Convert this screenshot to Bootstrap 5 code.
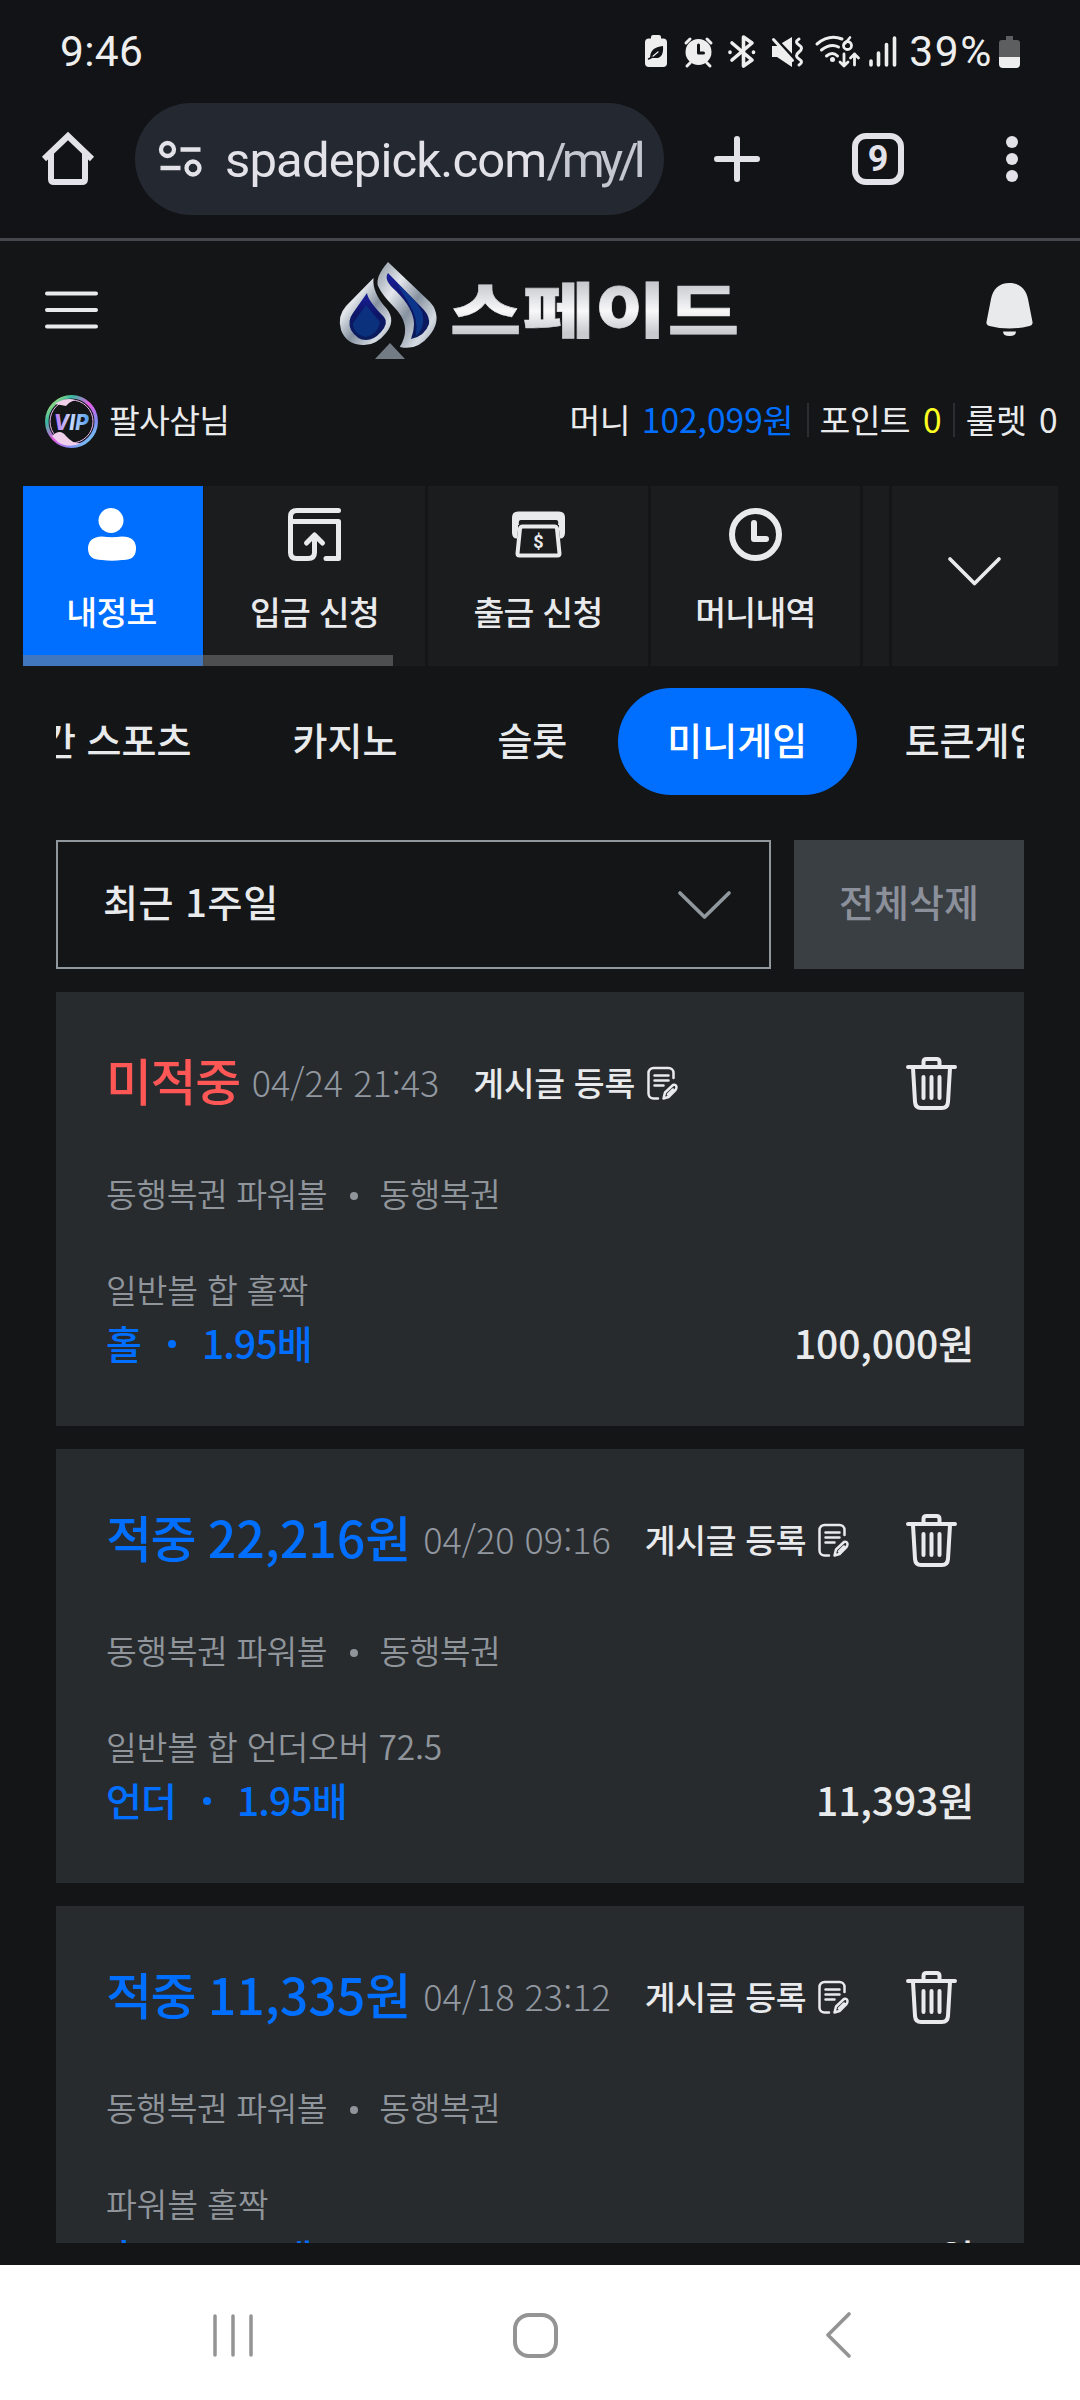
<!DOCTYPE html>
<html lang="ko">
<head>
<meta charset="utf-8">
<meta name="viewport" content="width=device-width, initial-scale=1">
<title>스페이드</title>
<link href="https://cdn.jsdelivr.net/npm/bootstrap@5.3.0/dist/css/bootstrap.min.css" rel="stylesheet">
<style>
  html, body { width: 1080px; height: 2400px; overflow: hidden; }
  body { background: #131517; color: #e9eaec; font-family: "Noto Sans CJK KR", sans-serif; font-size: 33.5px; line-height: 1.2; letter-spacing: -.7px; white-space: nowrap; }
  svg { display: block; flex: none; overflow: visible; }
  .sys { font-family: Roboto, sans-serif; letter-spacing: 0; background: #121316; }
  .statusbar { height: 103px; padding: 0 60px 0 60px; }
  .statusbar .txt { font-size: 42.5px; color: #eee; }
  .browserbar { height: 138px; padding: 0 0 23px 42px; border-bottom: 3px solid #46464f; }
  .urlpill { width: 529px; height: 112px; border-radius: 56px; background: #242830; margin-left: 41px; padding-left: 24px; }
  .urltext { font-size: 49px; color: #e3e2e9; margin-left: 23px; padding-top: 4px; letter-spacing: -.85px; }
  .urltext span { color: #c4c6d0; letter-spacing: -4.8px; }
  .tabcount { font-size: 36px; font-weight: 700; width: 52px; height: 52px; border: 6px solid #e3e2e9; border-radius: 14px; color: #e3e2e9; line-height: 1; margin-left: 91px; }
  .sitehead { height: 137px; padding: 0 47px 0 45px; }
  .brandname { font-weight: 900; font-size: 62px; line-height: 1; letter-spacing: 1px; margin: 0 0 4px 14px; transform: scaleX(1.25); transform-origin: left; background: linear-gradient(#c9cacf 12%, #f8f8f9 55%, #c9cacf 90%); -webkit-background-clip: text; background-clip: text; color: transparent; -webkit-text-stroke: .6px transparent; }
  .userline { height: 88px; padding: 0 23px 5px 45px; }
  .blue { color: #006fff; }
  .sepbar { width: 2px; height: 34px; background: #2b2d30; }
  .menubar { height: 180px; margin: 20px 22px 0 23px; }
  .tile { background: #1b1c1e; height: 180px; padding-top: 22px; font-weight: 500; }
  .tile .lbl { margin-top: 30px; line-height: 40px; }
  .tile.on { background: #006fff; color: #fff; padding-right: 3px; }
  .thumb { position: absolute; left: 0; bottom: 0; width: 370px; height: 11px; background: rgba(128,128,128,.5); }
  .cats { height: 107px; margin: 22px 56px 0; overflow: hidden; font-size: 38px; font-weight: 500; letter-spacing: 0; }
  .cats > div { flex: none; height: 107px; padding: 0 50.5px 6px; border-radius: 54px; }
  .cats .on { background: #006fff; color: #fff; padding: 0 49.5px 6px; }
  .filter { margin: 45px 56px 0; height: 129px; font-size: 38px; font-weight: 500; letter-spacing: 0; }
  .filter .cap { padding-bottom: 7px; }
  .pick { width: 715px; border: 2px solid #90979d; padding: 0 38px 0 45px; }
  .delall { width: 230px; background: #3a3f43; color: #8b909b; }
  .bets { margin: 23px 56px 0; height: 1251px; overflow: hidden; gap: 23px; }
  .bet { flex: none; height: 434px; background: #272b2e; padding: 61px 50px 0 50px; }
  .bet .headrow { height: 60px; }
  .bet h2 { font-size: 50px; font-weight: 500; letter-spacing: -1.4px; line-height: 60px; margin: 0; padding-bottom: 8px; }
  .bet h2 span { letter-spacing: 0; }
  .bet .when { font-size: 36px; font-weight: 300; color: #9298a0; margin-left: 12px; letter-spacing: 0; padding-bottom: 3px; }
  .bet .post { font-weight: 500; margin-left: 34px; letter-spacing: -.3px; padding-bottom: 1px; }
  .bet .noteicon { margin-left: 12px; }
  .bet .trashicon { margin-right: 17px; }
  .dim { color: #8f959b; font-weight: 350; line-height: 40px; letter-spacing: -.5px; }
  .game { margin-top: 60px; }
  .market { margin-top: 56px; letter-spacing: -.2px; }
  .pickrow { font-size: 39px; font-weight: 500; line-height: 50px; letter-spacing: -.1px; margin-top: 8px; }
  .pickrow .blue { letter-spacing: -.9px; }
  .dot { display: inline-block; width: 8px; height: 8px; border-radius: 50%; background: currentColor; margin: -3px 21px 0 23px; }
  .pickrow .dot { margin: 4px 26px 0 27px; }
  .androidnav { height: 135px; background: #fff; margin-top: 22px; padding: 5px 229px 0 213px; }
</style>
<script src="https://cdn.jsdelivr.net/npm/bootstrap@5.3.0/dist/js/bootstrap.bundle.min.js"></script>
</head>
<body>
<svg width="0" height="0" class="position-absolute">
  <defs>
    <linearGradient id="silver" x1="0" y1="0" x2="1" y2="1"><stop offset="0" stop-color="#8b949f"/><stop offset=".3" stop-color="#e4e8ed"/><stop offset=".55" stop-color="#8792a0"/><stop offset=".8" stop-color="#d5dbe2"/><stop offset="1" stop-color="#8e98a5"/></linearGradient>
    <linearGradient id="navy" x1="0" y1="0" x2="0" y2="1"><stop offset="0" stop-color="#1a1f9c"/><stop offset=".45" stop-color="#0d1566"/><stop offset="1" stop-color="#0b1d5c"/></linearGradient>
    <linearGradient id="ring" x1="0" y1="0" x2="1" y2="1"><stop offset="0" stop-color="#e8f06a"/><stop offset=".25" stop-color="#36b9a0"/><stop offset=".5" stop-color="#e95be4"/><stop offset=".75" stop-color="#7f8cf5"/><stop offset="1" stop-color="#6ff0ee"/></linearGradient>
    <linearGradient id="vip" x1="0" x2="1"><stop offset="0" stop-color="#b56cf0"/><stop offset=".5" stop-color="#c9dcf8"/><stop offset="1" stop-color="#4f9af0"/></linearGradient>
    <symbol id="note" viewBox="0 0 31 34"><g fill="none" stroke="#e9eaec" stroke-width="2.500" stroke-linecap="round" stroke-linejoin="round"><path d="M26.500 12V7a5 5 0 0 0-5-5H6.500a5 5 0 0 0-5 5v20.500a5 5 0 0 0 5 5h4.500M7.500 9.500h14M7.500 14.500h14M7.500 19.500h9M16.500 32.500l1.500-6 8-7.500q3-1 3.500 2 0 2-1 3l-7 7zM21 28.500l5-5"/></g></symbol>
    <symbol id="trash" viewBox="0 0 51 53"><g fill="none" stroke="#e9eaec" stroke-width="4" stroke-linecap="round" stroke-linejoin="round"><path d="M2 10h47M17.500 9V5q0-3 3-3h10q3 0 3 3v4M7 11l2 34q.5 6 6 6h21q5.500 0 6-6l2-34M17.500 20v21M25.500 20v21M33.500 20v21"/></g></symbol>
  </defs>
</svg>

<header class="sys">
  <div class="statusbar d-flex align-items-center">
    <div class="txt me-auto" style="letter-spacing:.3px">9:46</div>
    <svg width="262" height="36" viewBox="643 34 262 36" fill="none" stroke="#eee" stroke-width="3" stroke-linecap="round" stroke-linejoin="round">
      <g fill="#eee" stroke="none"><rect x="650" y="35" width="10" height="8" rx="2"/><rect x="644" y="38.500" width="22" height="28.500" rx="4"/></g>
      <path d="M649 58q0-11 13-12 1 13-8 12-2.500 0-5 0z" fill="#121316" stroke="none"/><path d="M651 57l6-5" stroke-width="1.200"/><path d="M647.500 59l4-2" stroke="#121316" stroke-width="1.500"/>
      <g><circle cx="697.500" cy="52" r="13" fill="#eee" stroke="none"/><path d="M685 43l4-4M710 43l-4-4M689 63l-3 3M706 63l3 3"/><path d="M697.500 45v8h5" stroke="#121316"/></g>
      <path d="M731 43l20 17-8.500 6V37l8.500 6-20 17M729 52v.5M752.500 52v.5" stroke-width="3.600"/>
      <path d="M771 46h5l15-9v30l-15-10h-5z" fill="#eee" stroke="none"/><path d="M774 39l20 21" stroke="#121316" stroke-width="4"/><path d="M772.500 39.500l19 21"/><path d="M798 39q-5 3 0 6t0 7 0 7 0 6" stroke-width="3"/>
      <path d="M816 44q12-10 25-5M820.500 50q9-7 17-3M825.500 56q6-5 11 0" /><circle cx="831.500" cy="59.500" r="2.500" fill="#eee" stroke="none"/><path d="M849 37.500l-5 6" stroke-width="2.600"/><circle cx="846.500" cy="45.500" r="4" stroke-width="2.800"/><path d="M843 54v12m-4-4l4 4 4-4M853.500 65V54m-4 4l4-4 4 4" stroke-width="2.800"/>
      <path d="M870 61v4M877.500 53v12M885.500 44.500v20.500M893.500 38v27" stroke-width="3.600"/>
    </svg>
    <div class="txt" style="margin-left:3px;letter-spacing:1.600px">39%</div>
    <svg style="margin-left:6px" width="21" height="32"><path d="M7 0h7v4h4q3 0 3 3v15H0V7q0-3 3-3h4z" fill="#5d5e60"/><path d="M0 21h21v7q0 4-4 4H4q-4 0-4-4z" fill="#eee"/></svg>
  </div>
  <div class="browserbar d-flex align-items-center">
    <svg width="52" height="52" fill="none" stroke="#e3e2e9" stroke-width="6" stroke-linejoin="round"><path d="M2 26L26 3l24 23" stroke-linejoin="miter"/><path d="M9 20v26q0 3 3 3h28q3 0 3-3V20"/></svg>
    <div class="urlpill d-flex align-items-center">
      <svg width="43" height="36" fill="none" stroke="#e3e2e9" stroke-width="4.300"><circle cx="8.500" cy="8.500" r="6.500"/><circle cx="34" cy="27" r="6.500"/><path d="M21.500 8.500h20M1.500 27h20"/></svg>
      <div class="urltext">spadepick.com<span>/my/l</span></div>
    </div>
    <svg style="margin-left:49px" width="48" height="48" stroke="#e3e2e9" stroke-width="6" stroke-linecap="round"><path d="M24 4v40M4 24h40"/></svg>
    <div class="tabcount d-flex align-items-center justify-content-center">9</div>
    <svg style="margin-left:102px" width="12" height="48" fill="#e3e2e9"><circle cx="6" cy="7" r="6"/><circle cx="6" cy="24" r="6"/><circle cx="6" cy="41" r="6"/></svg>
  </div>
</header>

<nav class="sitehead d-flex align-items-center">
  <svg width="53" height="38" stroke="#e9eaec" stroke-width="4" stroke-linecap="round"><path d="M2 2.500h49M2 19h49M2 35.500h49"/></svg>
  <svg style="margin-left:242px" width="96" height="97" viewBox="340 260 96 97">
    <path d="M373.500 277L346 305q-9 10-5 24 5 14 21 15 14 1 24-12 10-12 1-24-15-16-13.500-31z" fill="url(#silver)"/>
    <path d="M367 292q1 8 17 24 5 6-3 15-7 8-15 8-9 0-15-10-4-9 2-17z" fill="url(#navy)"/><path d="M366 304l-13 18q0 11 13 14 12-3 14-15z" fill="#0b3a86" opacity=".75"/>
    <path d="M388 261q-13 15-10 24 4 9 16 21 17 17 8 36-2 3-2 4 17 4 29-11 11-13 6-26-1-4-6-9z" fill="url(#silver)"/>
    <path d="M388 272q-5 7 8 18 18 18 18 33 0 7-3 15 14-3 18-15 1-7-5-14z" fill="url(#navy)"/><path d="M397 283q19 15 25 28 4 14-6 24 3-18-8-34z" fill="#0c3f92" opacity=".8"/>
    <path d="M390 342l15 16h-30z" fill="#737c85"/>
  </svg>
  <div class="brandname">스페이드</div>
  <svg class="ms-auto" width="47" height="53" fill="#e9eaec"><path d="M23.500 0C34 0 40 6 42 16l4.500 23q.5 3-3 4-20 5-40 0-3.500-1-3-4L5 16C7 6 13 0 23.500 0zM17 48.500h13q0 4.500-6.500 4.500T17 48.500z"/></svg>
</nav>

<div class="userline d-flex align-items-center">
  <svg width="53" height="53" class="mt-1"><circle cx="26.500" cy="26.500" r="24.700" fill="none" stroke="url(#ring)" stroke-width="3.500"/><circle cx="26.500" cy="26.500" r="21.500" fill="none" stroke="#f0b8f0" stroke-width="1"/><path d="M10 9q10-7 20-4-6 2-9 6-5-1-11-2zM7 41q8-8 14 0 8 9 16 7-14 6-24-1z" fill="#f0cfea"/><text x="26" y="34.500" text-anchor="middle" textLength="35" lengthAdjust="spacingAndGlyphs" font-family="Inter" font-weight="800" font-style="italic" font-size="22" fill="url(#vip)" letter-spacing="0">VIP</text></svg>
  <div style="margin-left:11px" class="me-auto">팔사삼님</div>
  <div>머니</div><div class="blue" style="margin-left:12px;letter-spacing:0">102,099원</div>
  <div class="sepbar" style="margin:0 11px 0 13px"></div><div>포인트</div><div style="margin-left:13px;color:#ff2">0</div>
  <div class="sepbar" style="margin:0 11px 0 12px"></div><div>룰렛</div><div style="margin-left:13px">0</div>
</div>

<div class="menubar d-flex position-relative">
  <div class="tile on d-flex flex-column align-items-center" style="width:180px">
    <svg width="48" height="53" fill="#fff"><ellipse cx="23" cy="12.500" rx="12.500" ry="12.500"/><path d="M14 28.500q10 1.500 20 0 14 0 14 12T34 52q-10 1.500-20 0Q0 52 0 40.500t14-12z"/></svg><div class="lbl">내정보</div>
  </div>
  <div class="tile d-flex flex-column align-items-center" style="width:221px;margin-left:1px">
    <svg width="53" height="53" fill="none" stroke="#e9eaec" stroke-width="5" stroke-linecap="round" stroke-linejoin="round"><path d="M50.500 2.500H9q-6.500 0-6.500 6v36q0 6 6 6H20q6.500 0 6.500-6V28M18.500 35l8-8 8 8M5 13.500h45.500v37H38"/></svg><div class="lbl">입금 신청</div>
  </div>
  <div class="tile d-flex flex-column align-items-center" style="width:220px;margin-left:3px">
    <svg width="53" height="53"><path d="M6 3.500h41q6 0 6 6v15q0 6-5 6l-1-9V17h-1q1-5-2-5H9q-3 0-2 5H6v4.500l-1 9q-5 0-5-6v-15q0-6 6-6z" fill="#e9eaec"/><path d="M10.500 18.500h32q2 0 2.500 2l2.500 25q0 2-2 2h-38q-2 0-2-2l2.500-25q.5-2 2.500-2z" fill="#1b1c1e" stroke="#e9eaec" stroke-width="4"/><text x="26.500" y="39.500" text-anchor="middle" font-family="Roboto" font-weight="700" font-size="18" fill="#e9eaec" letter-spacing="0">$</text></svg><div class="lbl">출금 신청</div>
  </div>
  <div class="tile d-flex flex-column align-items-center" style="width:209px;margin-left:3px">
    <svg width="53" height="53" fill="none" stroke="#e9eaec" stroke-width="6" stroke-linecap="round" stroke-linejoin="round"><circle cx="26.500" cy="26.500" r="23.500"/><path d="M25 15v16h12"/></svg><div class="lbl">머니내역</div>
  </div>
  <div class="tile" style="width:26px;margin-left:3px"></div>
  <div class="tile d-flex justify-content-center align-items-center p-0" style="width:166px;margin-left:3px">
    <svg width="53" height="28" fill="none" stroke="#e9eaec" stroke-width="3.700" stroke-linecap="round" stroke-linejoin="round" style="margin:0 2px 10px 0"><path d="M2 2l24.500 24.500L51 2"/></svg>
  </div>
  <div class="thumb"></div>
</div>

<div class="cats d-flex">
  <div class="d-flex align-items-center ps-0" style="margin-left:-15px">간 스포츠</div>
  <div class="d-flex align-items-center">카지노</div>
  <div class="d-flex align-items-center" style="margin-left:-1px">슬롯</div>
  <div class="d-flex align-items-center on">미니게임</div>
  <div class="d-flex align-items-center ps-5">토큰게임</div>
</div>

<div class="filter d-flex justify-content-between">
  <div class="pick d-flex align-items-center justify-content-between"><div class="cap" style="letter-spacing:.6px">최근 1주일</div>
    <svg width="53" height="28" fill="none" stroke="#90979d" stroke-width="3.700" stroke-linecap="round" stroke-linejoin="round"><path d="M2 2l24.500 24L51 2"/></svg></div>
  <div class="delall d-flex align-items-center justify-content-center"><div class="cap">전체삭제</div></div>
</div>

<main class="bets d-flex flex-column">
  <article class="bet">
    <div class="headrow d-flex align-items-center"><h2 style="color:#ff5656">미적중</h2><div class="when">04/24 21:43</div><div class="post">게시글 등록</div><svg class="noteicon" width="31" height="34"><use href="#note"/></svg><svg class="trashicon ms-auto" width="51" height="53"><use href="#trash"/></svg></div>
    <div class="dim game">동행복권 파워볼<span class="dot align-middle"></span>동행복권</div>
    <div class="dim market">일반볼 합 홀짝</div>
    <div class="pickrow d-flex align-items-center"><div class="blue">홀</div><i class="dot blue"></i><div class="blue me-auto">1.95배</div><div>100,000원</div></div>
  </article>
  <article class="bet">
    <div class="headrow d-flex align-items-center"><h2 class="blue">적중 <span>22,216원</span></h2><div class="when">04/20 09:16</div><div class="post">게시글 등록</div><svg class="noteicon" width="31" height="34"><use href="#note"/></svg><svg class="trashicon ms-auto" width="51" height="53"><use href="#trash"/></svg></div>
    <div class="dim game">동행복권 파워볼<span class="dot align-middle"></span>동행복권</div>
    <div class="dim market">일반볼 합 언더오버 72.5</div>
    <div class="pickrow d-flex align-items-center"><div class="blue">언더</div><i class="dot blue"></i><div class="blue me-auto">1.95배</div><div>11,393원</div></div>
  </article>
  <article class="bet">
    <div class="headrow d-flex align-items-center"><h2 class="blue">적중 <span>11,335원</span></h2><div class="when">04/18 23:12</div><div class="post">게시글 등록</div><svg class="noteicon" width="31" height="34"><use href="#note"/></svg><svg class="trashicon ms-auto" width="51" height="53"><use href="#trash"/></svg></div>
    <div class="dim game">동행복권 파워볼<span class="dot align-middle"></span>동행복권</div>
    <div class="dim market">파워볼 홀짝</div>
    <div class="pickrow d-flex align-items-center"><div class="blue">홀</div><i class="dot blue"></i><div class="blue me-auto">1.95배</div><div>5,813원</div></div>
  </article>
</main>

<footer class="androidnav d-flex align-items-center justify-content-between">
  <svg width="40" height="43" stroke="#949494" stroke-width="3.500" stroke-linecap="round"><path d="M2 2v39M20 2v39M38 2v39"/></svg>
  <svg width="45" height="45" fill="none" stroke="#949494" stroke-width="4" style="margin-right:9px"><rect x="2" y="2" width="41" height="41" rx="14"/></svg>
  <svg width="25" height="46" fill="none" stroke="#949494" stroke-width="3.700" stroke-linecap="round" stroke-linejoin="round"><path d="M23 2L2 23l21 21"/></svg>
</footer>
</body>
</html>
